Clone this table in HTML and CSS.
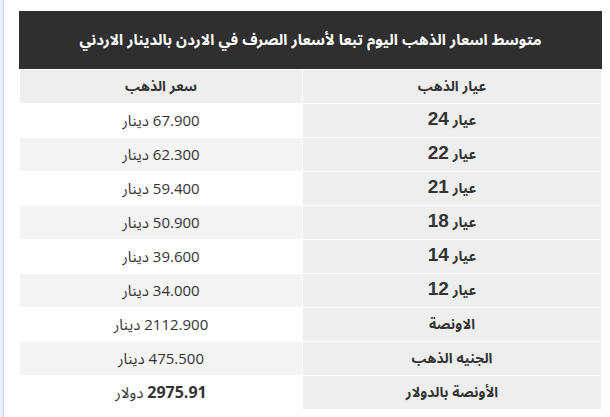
FILE: index.html
```html
<!DOCTYPE html>
<html lang="ar">
<head>
<meta charset="utf-8">
<link rel="stylesheet" href="styles.css">
</head>
<body>
<div class="frame">
  <div class="title">متوسط اسعار الذهب اليوم تبعا لأسعار الصرف في الاردن بالدينار الاردني</div>
  <table class="prices" dir="rtl">
    <thead>
      <tr><th class="karat">عيار الذهب</th><th class="price-h">سعر الذهب</th></tr>
    </thead>
    <tbody>
      <tr><th class="karat">عيار <b class="num">24</b></th><td>67.900 دينار</td></tr>
      <tr><th class="karat">عيار <b class="num">22</b></th><td>62.300 دينار</td></tr>
      <tr><th class="karat">عيار <b class="num">21</b></th><td>59.400 دينار</td></tr>
      <tr><th class="karat">عيار <b class="num">18</b></th><td>50.900 دينار</td></tr>
      <tr><th class="karat">عيار <b class="num">14</b></th><td>39.600 دينار</td></tr>
      <tr><th class="karat">عيار <b class="num">12</b></th><td>34.000 دينار</td></tr>
      <tr><th class="karat">الاونصة</th><td>2112.900 دينار</td></tr>
      <tr><th class="karat">الجنيه الذهب</th><td>475.500 دينار</td></tr>
      <tr><th class="karat">الأونصة بالدولار</th><td><b class="usd">2975.91</b> دولار</td></tr>
    </tbody>
  </table>
</div>
</body>
</html>
```
FILE: styles.css
```css
html, body {
  margin: 0;
  padding: 0;
}
body {
  background: #e8f0fa;
  font-family: "Liberation Sans", "Noto Sans Arabic", "Noto Naskh Arabic", "DejaVu Sans", sans-serif;
  color: #333;
}
.frame {
  margin-left: 3px;
  border-left: 1px solid #c6d6ec;
  background: #fff;
  min-height: 417px;
  padding: 11px 8px 0 15px;
  box-sizing: border-box;
}
.title {
  background: #2f2f2f;
  color: #fff;
  font-weight: bold;
  font-size: 15px;
  height: 58px;
  line-height: 58px;
  text-align: center;
  direction: rtl;
}
.prices {
  width: 100%;
  border-collapse: separate;
  border-spacing: 1px;
  table-layout: fixed;
}
.prices th, .prices td {
  height: 33px;
  padding: 0;
  text-align: center;
  vertical-align: middle;
}
.prices th.karat {
  width: 298px;
  background: #eeeeee;
  font-size: 14px;
  font-weight: bold;
}
.prices th.price-h {
  background: #eeeeee;
  font-size: 14px;
  font-weight: bold;
}
.prices td {
  font-family: "Open Sans", "Noto Sans Arabic", "DejaVu Sans", sans-serif;
  font-size: 15px;
  background: #fff;
}
.prices tbody tr:nth-child(even) td {
  background: #f4f4f4;
}
.num {
  font-size: 19px;
  font-family: "Liberation Sans", sans-serif;
}
.usd {
  font-size: 16px;
}
```
